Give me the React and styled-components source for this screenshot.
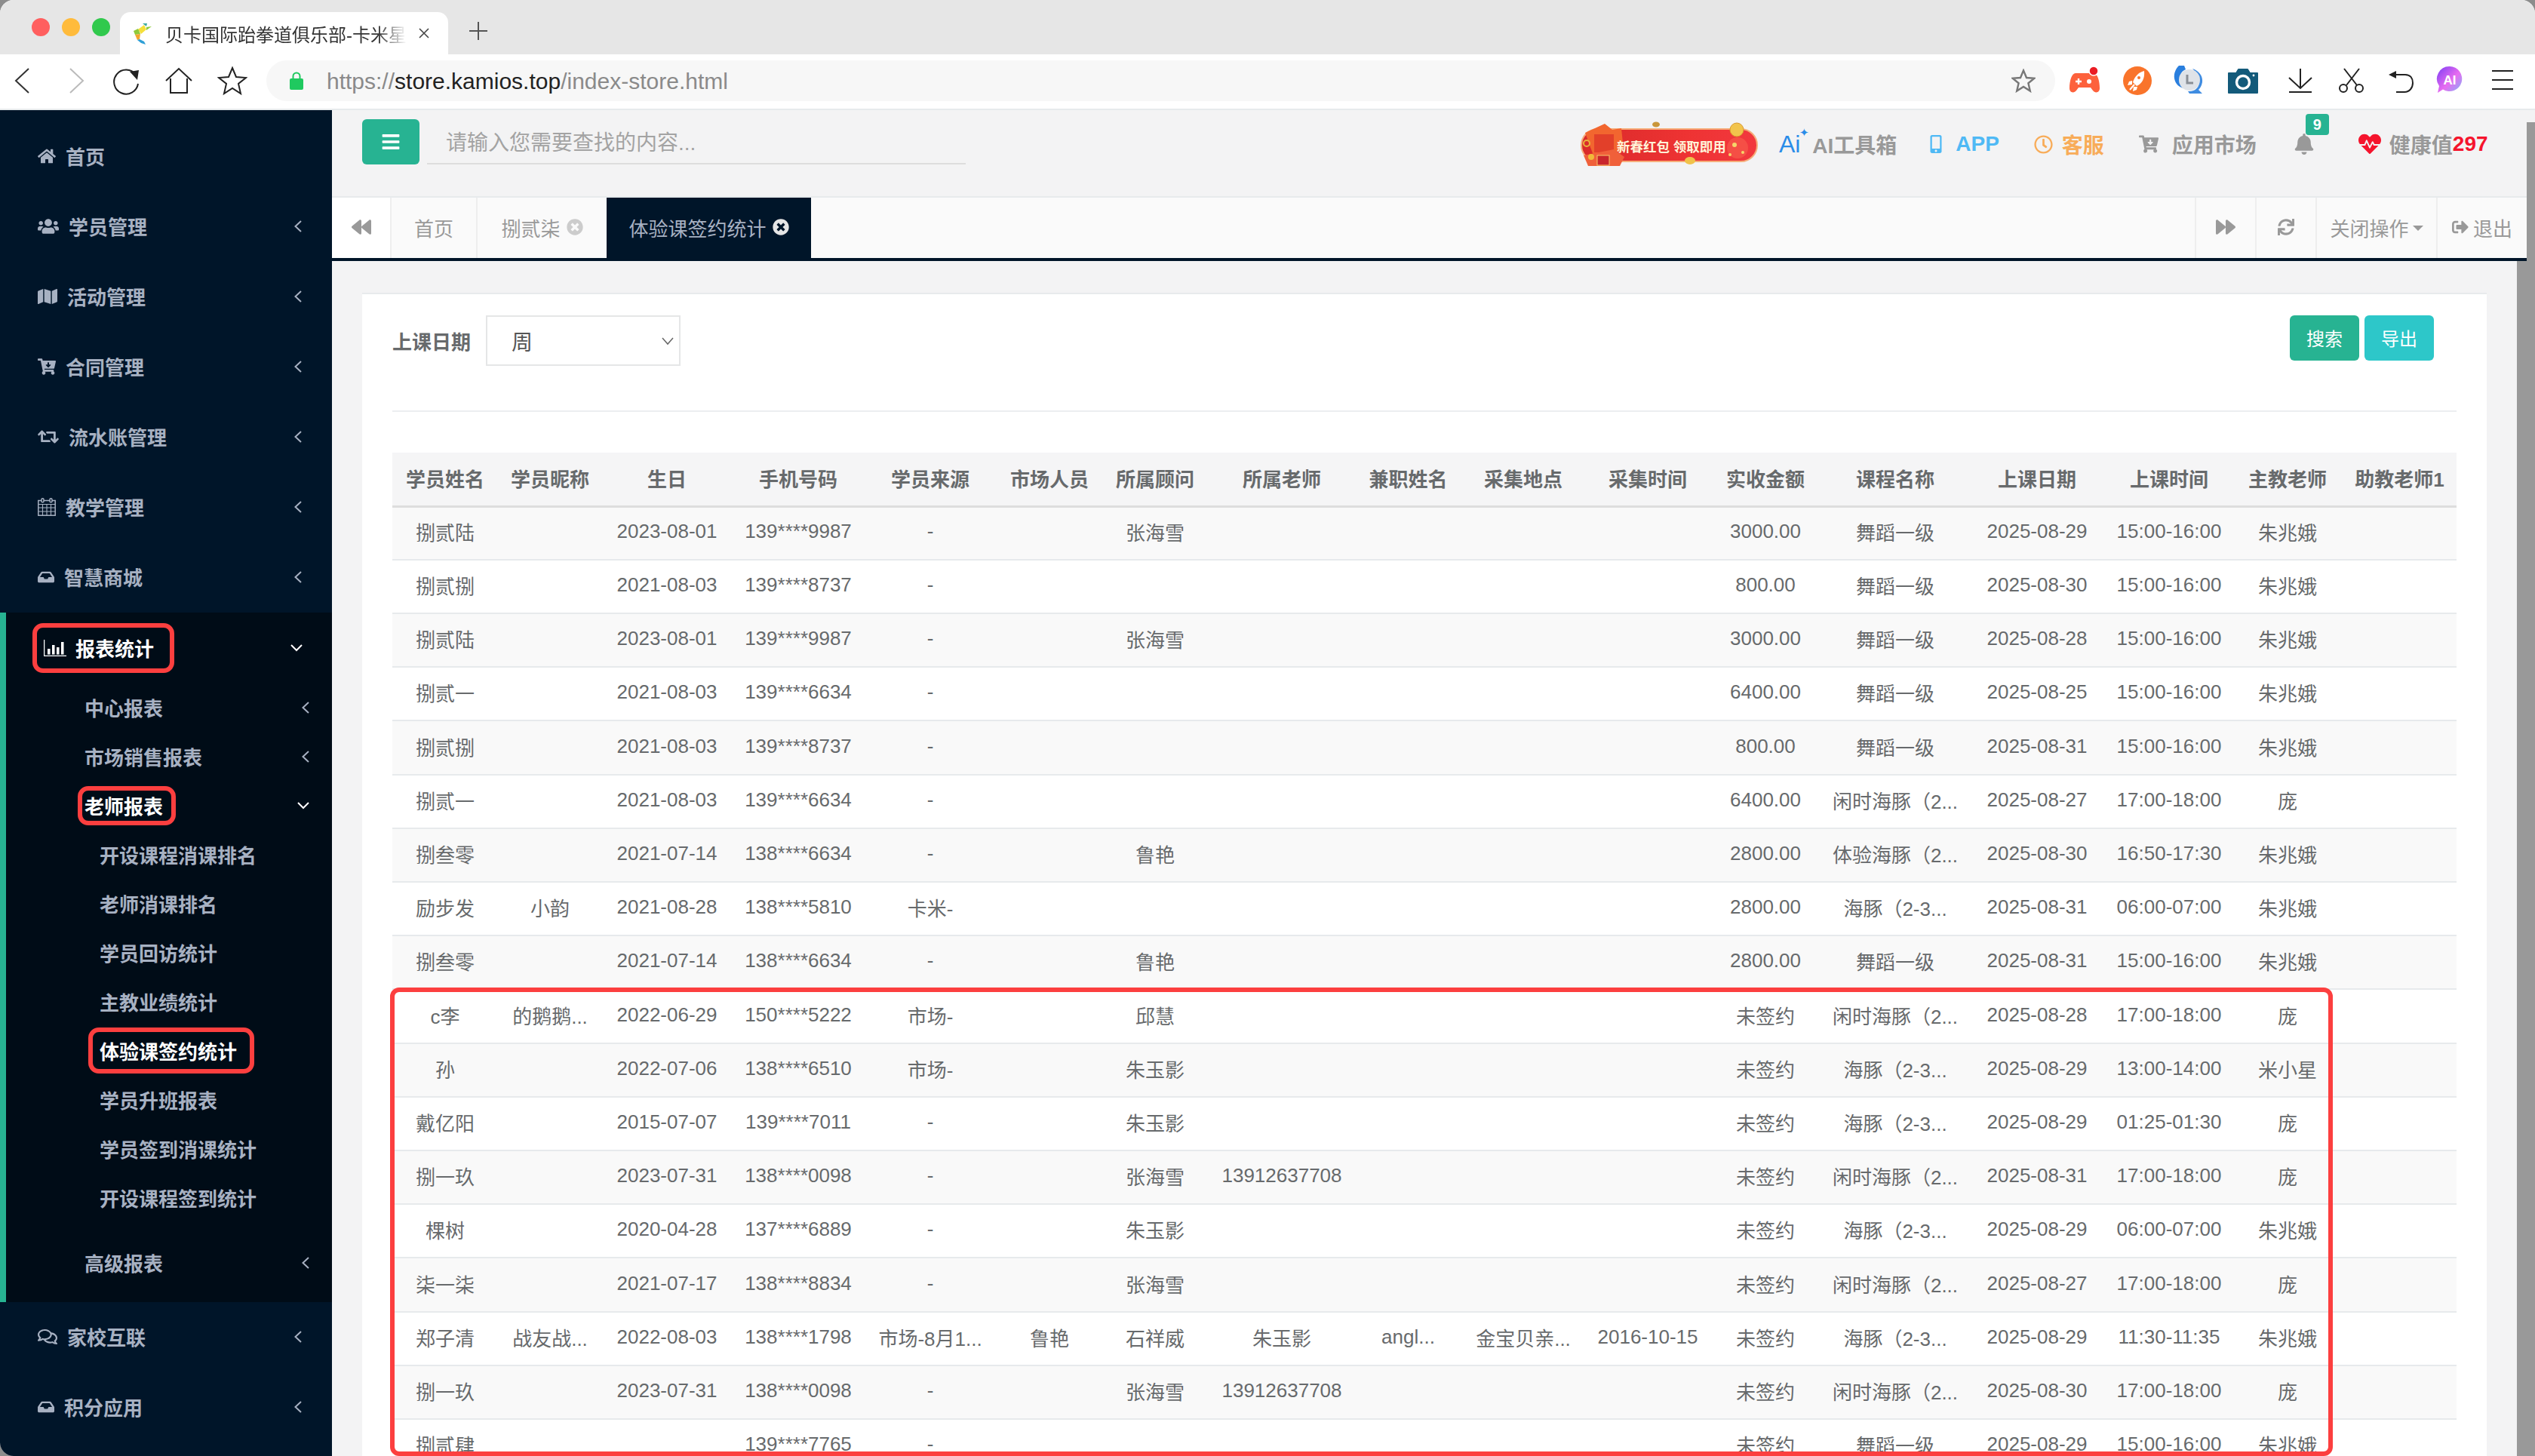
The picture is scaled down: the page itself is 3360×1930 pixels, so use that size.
import React from "react";
import styled, { createGlobalStyle } from "styled-components";
import {
  FaHome,
  FaUsers,
  FaMap,
  FaCartArrowDown,
  FaRetweet,
  FaInbox,
  FaRegComments,
  FaBars,
  FaBackward,
  FaForward,
  FaSync,
  FaTimesCircle,
  FaSignOutAlt,
  FaBell,
  FaHeartbeat,
  FaRegClock,
  FaMobileAlt,
} from "react-icons/fa";

const GlobalStyle = createGlobalStyle`
  html, body {
    margin: 0;
    padding: 0;
    background: #8c8c8c;
    overflow: hidden;
  }
  * { box-sizing: border-box; }
`;

const FONT = `"Liberation Sans", "Noto Sans CJK SC", sans-serif`;
const NAVY = "#001529";
const GREEN = "#27b392";
const RED = "#fc3f3f";

const Chevron = ({ dir = "left", color = "#a7b1c2" }) =>
  dir === "left" ? (
    <svg width="10" height="16" viewBox="0 0 10 16" fill="none" stroke={color} strokeWidth="2">
      <polyline points="9,1 1.5,8 9,15" />
    </svg>
  ) : (
    <svg width="16" height="10" viewBox="0 0 16 10" fill="none" stroke={color} strokeWidth="2">
      <polyline points="1,1 8,8 15,1" />
    </svg>
  );

const CalendarIcon = () => (
  <svg viewBox="0 0 24 24" fill="none" stroke="#a7b1c2" strokeWidth="1.5">
    <rect x="0.8" y="3.5" width="22.4" height="19.7" />
    <path d="M0.8 8.5h22.4M0.8 13h22.4M0.8 18h22.4M6.5 8.5v14.7M12 8.5v14.7M17.5 8.5v14.7" strokeWidth="1.1" />
    <rect x="5" y="0.8" width="3" height="5" rx="1.4" fill={NAVY} />
    <rect x="16" y="0.8" width="3" height="5" rx="1.4" fill={NAVY} />
  </svg>
);

const ChartIcon = () => (
  <svg viewBox="0 0 30 22" fill="#fff">
    <path d="M0.6 0v21.4H30" fill="none" stroke="#fff" strokeWidth="1.3" />
    <rect x="5" y="12" width="3.5" height="7.5" />
    <rect x="11" y="7" width="3.5" height="12.5" />
    <rect x="17" y="10" width="3.5" height="9.5" />
    <rect x="23" y="3" width="3.5" height="16.5" />
  </svg>
);

const DolphinIcon = () => (
  <svg width="28" height="32" viewBox="0 0 28 32">
    <path d="M14 3l6 0-1 4z" fill="#3ba8a0" />
    <path d="M8 11l8-6 3 6-7 6z" fill="#f5e03a" />
    <path d="M19 8l7-1-7 5z" fill="#8fc93a" />
    <path d="M2 13l6-3 3 7-7 1z" fill="#8fc93a" />
    <path d="M4 18l7-1-1 7-3 1z" fill="#f3a52d" />
    <path d="M7 25l3-1 6 3 2 4-6-2z" fill="#2e9fd6" />
  </svg>
);

const GameIcon = () => (
  <svg viewBox="0 0 44 44">
    <path d="M10 12h24c5 0 8 10 8 20 0 6-6 7-9 3l-3-4H14l-3 4c-3 4-9 3-9-3 0-10 3-20 8-20z" fill="#fd613c" />
    <path d="M10 23h8M14 19v8" stroke="#fff" strokeWidth="2.4" />
    <circle cx="28" cy="23" r="3" fill="#fff" />
    <circle cx="34" cy="9" r="6" fill="#ea1c24" stroke="#fff" strokeWidth="1.5" />
  </svg>
);

const RocketIcon = () => (
  <svg viewBox="0 0 44 44">
    <circle cx="22" cy="22" r="19" fill="#f9742b" />
    <path d="M31 9c-8 2-13 8-15 15l5 5c7-3 11-10 10-20z" fill="#fff" />
    <path d="M15 22l-4 1-2 5 6-1zM22 30l-1 4-5 2 1-6z" fill="#fff" />
    <path d="M12 34l6-7" stroke="#fff" strokeWidth="2" />
    <circle cx="24" cy="18" r="2" fill="#f9742b" />
  </svg>
);

const ClockIcon = () => (
  <svg viewBox="0 0 44 44">
    <path d="M8 2l7 0 2 5c-5 2-8 7-8 12 0 6 3 10 8 13-8 0-14-6-15-13C1 12 4 6 8 2z" fill="#2a7fde" />
    <path d="M26 6c9 3 14 10 13 18-1 5-3 8-5 10l5 5H22l-2-3c9 1 15-5 15-13 0-7-4-12-9-17z" fill="#2a7fde" opacity="0.9" />
    <circle cx="22" cy="21" r="14" fill="#dfe3e8" />
    <path d="M19 14v11h8" stroke="#8a8f96" strokeWidth="3" fill="none" />
  </svg>
);

const CameraIcon = () => (
  <svg viewBox="0 0 44 44">
    <path d="M3 12h10l3-5h12l3 5h10v26H3z" fill="#135a7a" stroke="#135a7a" strokeWidth="2" strokeLinejoin="round" />
    <circle cx="22" cy="24" r="8.5" fill="none" stroke="#fff" strokeWidth="3.4" />
    <circle cx="36" cy="15" r="1.4" fill="#fff" />
  </svg>
);

const AiIcon = () => (
  <svg viewBox="0 0 44 44">
    <defs>
      <linearGradient id="aiGrad" x1="0" y1="0" x2="1" y2="1">
        <stop offset="0" stopColor="#7a3cf5" />
        <stop offset="0.55" stopColor="#e86cf0" />
        <stop offset="1" stopColor="#7fb4f8" />
      </linearGradient>
    </defs>
    <path d="M22 3a16.500 16.500 0 1 1-9 30.500L6 38l2-9A16.500 16.500 0 0 1 22 3z" fill="url(#aiGrad)" />
    <text x="22" y="27" textAnchor="middle" fontFamily="Liberation Sans" fontWeight="700" fontSize="17" fill="#fff">
      AI
    </text>
  </svg>
);

const stroke = { fill: "none", stroke: "#222", strokeWidth: 2 };

const DownloadIcon = () => (
  <svg viewBox="0 0 44 44" {...stroke}>
    <path d="M22 6v26M7 18l15 14 15-14M7 37h30" />
  </svg>
);
const ScissorsIcon = () => (
  <svg viewBox="0 0 44 44" {...stroke}>
    <path d="M12 6l17 22M32 6L15 28" />
    <circle cx="11" cy="32" r="5" />
    <circle cx="32" cy="32" r="5" />
  </svg>
);
const UndoIcon = () => (
  <svg viewBox="0 0 44 44" {...stroke}>
    <path d="M12 14h14c7 0 10 5 10 11s-4 12-11 12H14" />
    <path d="M4 14l10-5v10z" fill="#222" stroke="none" />
  </svg>
);
const MenuIcon = () => (
  <svg viewBox="0 0 44 44" {...stroke}>
    <path d="M8 9h28M8 21h28M8 33h28" />
  </svg>
);

const Page = styled.div`
  width: 3360px;
  height: 1930px;
  overflow: hidden;
  position: relative;
  display: flex;
  flex-direction: column;
  border-radius: 18px 18px 0 18px;
  background: #fff;
  font-family: ${FONT};
`;

const TabStrip = styled.div`
  height: 72px;
  background: #e6e6e6;
  display: flex;
  align-items: flex-end;
  padding-left: 42px;
  flex: none;
`;

const Lights = styled.div`
  display: flex;
  gap: 16px;
  align-self: flex-start;
  margin-top: 24px;
`;

const Light = styled.span`
  width: 24px;
  height: 24px;
  border-radius: 50%;
  background: ${(p) => p.$c};
`;

const BrowserTab = styled.div`
  width: 435px;
  height: 56px;
  margin-left: 13px;
  background: #fff;
  border-radius: 14px 14px 0 0;
  display: flex;
  align-items: center;
  padding: 0 18px 0 16px;
  color: #333;
`;

const TabTitle = styled.span`
  width: 320px;
  margin-left: 16px;
  font-size: 24px;
  white-space: nowrap;
  -webkit-mask-image: linear-gradient(90deg, #000 88%, transparent);
  mask-image: linear-gradient(90deg, #000 88%, transparent);
`;

const TabClose = styled.svg`
  margin-left: 16px;
`;

const NewTab = styled.svg`
  margin-left: 28px;
  align-self: center;
  margin-top: 10px;
`;

const Toolbar = styled.div`
  height: 74px;
  flex: none;
  display: flex;
  align-items: center;
  background: #fff;
  border-bottom: 2px solid #e7eaec;
  padding-left: 9px;
  padding-bottom: 2px;
`;

const NavSvg = styled.svg`
  width: 40px;
  height: 40px;
  flex: none;
  margin-left: ${(p) => p.$ml || 0}px;
`;

const Address = styled.div`
  width: 2371px;
  height: 54px;
  margin-left: 25px;
  border-radius: 27px;
  background: #f7f7f7;
  display: flex;
  align-items: center;
  padding: 0 26px 0 31px;
  font-size: 30px;
  color: #8a8a8a;
`;

const LockIcon = () => (
  <svg width="18" height="26" viewBox="0 0 18 26">
    <path d="M4.500 11V7a4.500 4.500 0 0 1 9 0v4" fill="none" stroke="#1fc95f" strokeWidth="2" />
    <rect x="0" y="10" width="18" height="15" rx="2" fill="#1fc95f" />
  </svg>
);

const Url = styled.span`
  margin-left: 31px;
  margin-top: 2px;
  flex: 1;
  b {
    font-weight: 400;
    color: #222;
  }
`;

const ExtIcon = styled.span`
  width: 44px;
  height: 44px;
  flex: none;
  margin-left: ${(p) => p.$ml}px;
  svg {
    width: 44px;
    height: 44px;
    display: block;
  }
`;

const Body = styled.div`
  flex: 1;
  display: flex;
  min-height: 0;
  position: relative;
`;

const Sidebar = styled.nav`
  width: 440px;
  flex: none;
  background: ${NAVY};
  padding-top: 15px;
  color: #a7b1c2;
  font-size: 26px;
  font-weight: 700;
`;

const NavRow = styled.div`
  height: 93px;
  display: flex;
  align-items: center;
  padding: 0 40px 2px 50px;
`;

const NavIcon = styled.span`
  width: ${(p) => p.$w}px;
  height: 28px;
  margin-right: 13px;
  flex: none;
  display: flex;
  align-items: center;
  svg {
    width: ${(p) => p.$w}px;
    height: 28px;
    display: block;
  }
`;

const NavLabel = styled.span`
  flex: 1;
`;

const ActiveGroup = styled.div`
  background: #000c17;
  border-left: 8px solid ${GREEN};
  padding-bottom: 20px;
`;

const ActiveHead = styled.div`
  height: 93px;
  display: flex;
  align-items: center;
  padding: 0 39px 0 50px;
  color: #fff;
`;

const Highlight = styled.span`
  display: inline-flex;
  align-items: center;
  color: #fff;
  border: 6px solid ${RED};
  border-radius: 14px;
  height: ${(p) => p.$h}px;
  width: ${(p) => p.$w}px;
  margin-left: ${(p) => p.$ml}px;
  padding-left: ${(p) => p.$pl}px;
  flex: none;
`;

const ChartBox = styled.span`
  width: 30px;
  height: 22px;
  margin-right: 12px;
  flex: none;
  svg {
    display: block;
    width: 30px;
    height: 22px;
  }
`;

const SubRow = styled.div`
  height: 65px;
  display: flex;
  align-items: center;
  justify-content: space-between;
  padding: 0 30px 0 104px;
  margin-top: ${(p) => p.$mt || 0}px;
`;

const LeafRow = styled.div`
  height: 65px;
  display: flex;
  align-items: center;
  padding-left: 124px;
  font-size: 26px;
`;

const Grow = styled.div`
  flex: 1;
`;

const Main = styled.main`
  flex: 1;
  min-width: 0;
  background: #f3f3f4;
  display: flex;
  flex-direction: column;
`;

const Header = styled.header`
  height: 114px;
  flex: none;
  display: flex;
  padding: 12px 0 0 40px;
  font-size: 28px;
  font-weight: 700;
  color: #999;
`;

const MenuBtn = styled.div`
  width: 76px;
  height: 60px;
  border-radius: 6px;
  background: ${GREEN};
  color: #fff;
  display: flex;
  align-items: center;
  justify-content: center;
  font-size: 26px;
`;

const SearchBox = styled.div`
  width: 714px;
  height: 60px;
  margin-left: 10px;
  border-bottom: 2px solid #ddd;
  padding: 0 0 0 25px;
  display: flex;
  align-items: center;
  font-size: 28px;
  font-weight: 400;
  color: #a3a3a3;
`;

const HeaderRight = styled.div`
  flex: 1;
  height: 66px;
  display: flex;
  align-items: center;
  padding-left: 815px;
`;

const Banner = styled.div`
  position: relative;
  width: 235px;
  height: 62px;
  flex: none;
  display: flex;
  align-items: center;
  font-size: 17.500px;
  color: #fff3d8;
  font-weight: 700;
  padding-left: 48px;
  white-space: nowrap;
  &::before {
    content: "";
    position: absolute;
    left: 0;
    right: 0;
    top: 10px;
    bottom: 7px;
    border-radius: 24px;
    background: linear-gradient(90deg, #d92a2a, #ee3333 60%, #f2383e);
    border: 2px solid #f6ad7a;
  }
`;

const BannerText = styled.span`
  position: relative;
  margin-top: 4px;
`;

const BannerArt = styled.svg`
  position: absolute;
  left: 0;
  top: 0;
  width: 235px;
  height: 62px;
`;

const HeadLink = styled.span`
  display: flex;
  align-items: center;
  flex: none;
  color: ${(p) => p.$c || "#999"};
  margin-left: ${(p) => p.$ml}px;
  white-space: nowrap;
`;

const HeadIcon = styled.span`
  display: flex;
  align-items: center;
  margin-right: ${(p) => p.$mr}px;
  color: ${(p) => p.$c || "inherit"};
  font-size: ${(p) => p.$s}px;
  svg {
    display: block;
  }
`;

const AiMark = styled.span`
  position: relative;
  color: #2a8ce8;
  font-weight: 400;
  font-size: 32px;
  margin-right: 8px;
  &::after {
    content: "✦";
    position: absolute;
    font-size: 15px;
    right: -12px;
    top: -6px;
  }
`;

const BellBox = styled.span`
  position: relative;
  display: flex;
  margin-left: 49px;
  color: #999;
  font-size: 28px;
`;

const BellBadge = styled.span`
  position: absolute;
  left: 16px;
  top: -26px;
  width: 31px;
  height: 28px;
  border-radius: 4px;
  background: ${GREEN};
  color: #fff;
  font-size: 20px;
  font-weight: 700;
  display: flex;
  align-items: center;
  justify-content: center;
`;

const Red = styled.span`
  color: #f5142d;
`;

const TabBar = styled.div`
  height: 86px;
  flex: none;
  margin-right: 11px;
  background: #fafafa;
  border-top: 2px solid #e7eaec;
  border-bottom: 4px solid ${NAVY};
  display: flex;
  font-size: 26px;
  color: #999;
`;

const TabBtn = styled.div`
  width: ${(p) => p.$w}px;
  flex: none;
  display: flex;
  align-items: center;
  justify-content: center;
  gap: ${(p) => p.$gap || 0}px;
  padding-bottom: 2px;
  background: ${(p) => (p.$white ? "#fff" : "transparent")};
  border-right: ${(p) => (p.$line === "r" ? "2px solid #eee" : "none")};
  border-left: ${(p) => (p.$line === "l" ? "2px solid #eee" : "none")};
  white-space: nowrap;
`;

const ActiveTab = styled(TabBtn)`
  background: ${NAVY};
  color: #a7b1c2;
`;

const TabFill = styled.div`
  flex: 1;
`;

const Caret = styled.i`
  width: 0;
  height: 0;
  margin-left: 5px;
  margin-top: 3px;
  border-left: 7px solid transparent;
  border-right: 7px solid transparent;
  border-top: 7px solid #999;
`;

const Content = styled.div`
  flex: 1;
  min-height: 0;
  padding: 42px 64px 0 40px;
  overflow: hidden;
`;

const Panel = styled.section`
  background: #fff;
  border-top: 2px solid #e7eaec;
  padding: 28px 40px 0;
  height: 1600px;
`;

const FilterRow = styled.div`
  display: flex;
  align-items: flex-start;
  justify-content: space-between;
  height: 128px;
  border-bottom: 2px solid #eceef0;
  padding-right: 30px;
`;

const FilterLeft = styled.div`
  display: flex;
  align-items: center;
  gap: 20px;
  font-size: 26px;
  font-weight: 700;
  color: #676a6c;
`;

const FakeSelect = styled.div`
  width: 258px;
  height: 67px;
  border: 2px solid #e5e6e7;
  display: flex;
  align-items: center;
  justify-content: space-between;
  padding: 0 6px 0 32px;
  font-weight: 400;
  font-size: 28px;
  color: #555;
`;

const FilterButtons = styled.div`
  display: flex;
  gap: 7px;
`;

const ActionBtn = styled.div`
  width: 92px;
  height: 60px;
  border-radius: 6px;
  background: ${(p) => p.$c};
  color: #fff;
  font-size: 24px;
  padding-bottom: 2px;
  display: flex;
  align-items: center;
  justify-content: center;
`;

const TableWrap = styled.div`
  position: relative;
  margin-top: 54px;
`;

const Table = styled.table`
  width: 2736px;
  table-layout: fixed;
  border-collapse: collapse;
  font-size: 26px;
  color: #676a6c;

  th {
    height: 71px;
    padding: 0 0 3px;
    text-align: center;
    font-weight: 700;
    background: #f5f5f6;
    border-bottom: 3px solid #ddd;
    white-space: nowrap;
  }
  td {
    height: 71px;
    padding: 0 0 4px;
    text-align: center;
    border-bottom: 2px solid #e7eaec;
    white-space: nowrap;
  }
  tbody tr:nth-child(5n) td {
    height: 72px;
  }
  tbody tr:nth-child(odd) td {
    background: #f9f9f9;
  }
`;

const RedFrame = styled.div`
  position: absolute;
  left: -3px;
  top: 709px;
  width: 2575px;
  height: 621px;
  border: 6px solid ${RED};
  border-radius: 12px;
  pointer-events: none;
`;

const ScrollThumb = styled.div`
  position: absolute;
  right: 0;
  top: ${(p) => p.$top}px;
  bottom: 0;
  width: ${(p) => p.$w}px;
  background: #999;
`;

const COLS = [140, 138, 172, 176, 174, 142, 138, 198, 137, 168, 162, 150, 194, 182, 168, 146, 151];
const HEADS = [
  "学员姓名", "学员昵称", "生日", "手机号码", "学员来源", "市场人员", "所属顾问", "所属老师", "兼职姓名",
  "采集地点", "采集时间", "实收金额", "课程名称", "上课日期", "上课时间", "主教老师", "助教老师1",
];

const W = "舞蹈一级";
const X = "闲时海豚（2...";
const H = "海豚（2-3...";
const Z = "朱兆娥";
const T = "15:00-16:00";
const E = "17:00-18:00";
const N = "未签约";
const r = (name, nick, birth, phone, src, mkt, adv, tch, pt, place, time, amt, course, date, clock, main) => [
  name, nick, birth, phone, src, mkt, adv, tch, pt, place, time, amt, course, date, clock, main, "",
];

const ROWS = [
  r("捌贰陆", "", "2023-08-01", "139****9987", "-", "", "张海雪", "", "", "", "", "3000.00", W, "2025-08-29", T, Z),
  r("捌贰捌", "", "2021-08-03", "139****8737", "-", "", "", "", "", "", "", "800.00", W, "2025-08-30", T, Z),
  r("捌贰陆", "", "2023-08-01", "139****9987", "-", "", "张海雪", "", "", "", "", "3000.00", W, "2025-08-28", T, Z),
  r("捌贰一", "", "2021-08-03", "139****6634", "-", "", "", "", "", "", "", "6400.00", W, "2025-08-25", T, Z),
  r("捌贰捌", "", "2021-08-03", "139****8737", "-", "", "", "", "", "", "", "800.00", W, "2025-08-31", T, Z),
  r("捌贰一", "", "2021-08-03", "139****6634", "-", "", "", "", "", "", "", "6400.00", X, "2025-08-27", E, "庞"),
  r("捌叁零", "", "2021-07-14", "138****6634", "-", "", "鲁艳", "", "", "", "", "2800.00", "体验海豚（2...", "2025-08-30", "16:50-17:30", Z),
  r("励步发", "小韵", "2021-08-28", "138****5810", "卡米-", "", "", "", "", "", "", "2800.00", H, "2025-08-31", "06:00-07:00", Z),
  r("捌叁零", "", "2021-07-14", "138****6634", "-", "", "鲁艳", "", "", "", "", "2800.00", W, "2025-08-31", T, Z),
  r("c李", "的鹅鹅...", "2022-06-29", "150****5222", "市场-", "", "邱慧", "", "", "", "", N, X, "2025-08-28", E, "庞"),
  r("孙", "", "2022-07-06", "138****6510", "市场-", "", "朱玉影", "", "", "", "", N, H, "2025-08-29", "13:00-14:00", "米小星"),
  r("戴亿阳", "", "2015-07-07", "139****7011", "-", "", "朱玉影", "", "", "", "", N, H, "2025-08-29", "01:25-01:30", "庞"),
  r("捌一玖", "", "2023-07-31", "138****0098", "-", "", "张海雪", "13912637708", "", "", "", N, X, "2025-08-31", E, "庞"),
  r("棵树", "", "2020-04-28", "137****6889", "-", "", "朱玉影", "", "", "", "", N, H, "2025-08-29", "06:00-07:00", Z),
  r("柒一柒", "", "2021-07-17", "138****8834", "-", "", "张海雪", "", "", "", "", N, X, "2025-08-27", E, "庞"),
  r("郑子清", "战友战...", "2022-08-03", "138****1798", "市场-8月1...", "鲁艳", "石祥威", "朱玉影", "angl...", "金宝贝亲...", "2016-10-15", N, H, "2025-08-29", "11:30-11:35", Z),
  r("捌一玖", "", "2023-07-31", "138****0098", "-", "", "张海雪", "13912637708", "", "", "", N, X, "2025-08-30", E, "庞"),
  r("捌贰肆", "", "", "139****7765", "-", "", "", "", "", "", "", N, W, "2025-08-29", T, Z),
];

const TOP_NAV = [
  { label: "首页", icon: <FaHome />, w: 24, plain: true },
  { label: "学员管理", icon: <FaUsers />, w: 28 },
  { label: "活动管理", icon: <FaMap />, w: 26 },
  { label: "合同管理", icon: <FaCartArrowDown />, w: 24 },
  { label: "流水账管理", icon: <FaRetweet />, w: 28 },
  { label: "教学管理", icon: <CalendarIcon />, w: 24 },
  { label: "智慧商城", icon: <FaInbox />, w: 22 },
];

const BOTTOM_NAV = [
  { label: "家校互联", icon: <FaRegComments />, w: 26 },
  { label: "积分应用", icon: <FaInbox />, w: 22 },
];

const NavItem = ({ item }) => (
  <NavRow>
    <NavIcon $w={item.w}>{item.icon}</NavIcon>
    <NavLabel>{item.label}</NavLabel>
    {!item.plain && <Chevron />}
  </NavRow>
);

const EXT = [
  [GameIcon, 17],
  [RocketIcon, 26],
  [ClockIcon, 25],
  [CameraIcon, 27],
  [DownloadIcon, 32],
  [ScissorsIcon, 24],
  [UndoIcon, 23],
  [AiIcon, 19],
  [MenuIcon, 26],
];

export default function App() {
  return (
    <Page>
      <GlobalStyle />
      <TabStrip>
        <Lights>
          <Light $c="#ff5f5f" />
          <Light $c="#ffbb3c" />
          <Light $c="#31c94d" />
        </Lights>
        <BrowserTab>
          <DolphinIcon />
          <TabTitle>贝卡国际跆拳道俱乐部-卡米星</TabTitle>
          <TabClose width="14" height="14" viewBox="0 0 14 14" stroke="#444" strokeWidth="1.6">
            <path d="M1 1l12 12M13 1L1 13" />
          </TabClose>
        </BrowserTab>
        <NewTab width="24" height="24" viewBox="0 0 24 24" stroke="#555" strokeWidth="2">
          <path d="M12 0v24M0 12h24" />
        </NewTab>
      </TabStrip>

      <Toolbar>
        <NavSvg viewBox="0 0 40 40" fill="none" stroke="#333" strokeWidth="2">
          <polyline points="29,4 12,20 29,36" />
        </NavSvg>
        <NavSvg $ml={32} viewBox="0 0 40 40" fill="none" stroke="#bbb" strokeWidth="2">
          <polyline points="12,4 29,20 12,36" />
        </NavSvg>
        <NavSvg $ml={26} viewBox="0 0 40 40" fill="none" stroke="#222" strokeWidth="2">
          <path d="M33 12A16 16 0 1 0 36 24" />
          <path d="M25 8l12-2-2 13z" fill="#222" stroke="none" />
        </NavSvg>
        <NavSvg $ml={30} viewBox="0 0 40 40" fill="none" stroke="#222" strokeWidth="2">
          <path d="M3 20L20 4l17 16M9 17v19h22V17" />
        </NavSvg>
        <NavSvg $ml={31} viewBox="0 0 40 40" fill="none" stroke="#222" strokeWidth="2">
          <path d="M20 3l5 12 13 1-10 8 3 13-11-7-11 7 3-13-10-8 13-1z" />
        </NavSvg>
        <Address>
          <LockIcon />
          <Url>
            https://<b>store.kamios.top</b>/index-store.html
          </Url>
          <svg width="32" height="32" viewBox="0 0 40 40" fill="none" stroke="#777" strokeWidth="3">
            <path d="M20 3l5 12 13 1-10 8 3 13-11-7-11 7 3-13-10-8 13-1z" />
          </svg>
        </Address>
        {EXT.map(([Icon, ml], i) => (
          <ExtIcon key={i} $ml={ml}>
            <Icon />
          </ExtIcon>
        ))}
      </Toolbar>

      <Body>
        <Sidebar>
          {TOP_NAV.map((item) => (
            <NavItem key={item.label} item={item} />
          ))}
          <ActiveGroup>
            <ActiveHead>
              <Highlight $w={188} $h={66} $ml={-15} $pl={9}>
                <ChartBox>
                  <ChartIcon />
                </ChartBox>
                报表统计
              </Highlight>
              <Grow />
              <Chevron dir="down" color="#fff" />
            </ActiveHead>
            <SubRow>
              中心报表
              <Chevron />
            </SubRow>
            <SubRow>
              市场销售报表
              <Chevron />
            </SubRow>
            <SubRow>
              <Highlight $w={130} $h={52} $ml={-9} $pl={3}>
                老师报表
              </Highlight>
              <Chevron dir="down" color="#fff" />
            </SubRow>
            <LeafRow>开设课程消课排名</LeafRow>
            <LeafRow>老师消课排名</LeafRow>
            <LeafRow>学员回访统计</LeafRow>
            <LeafRow>主教业绩统计</LeafRow>
            <LeafRow>
              <Highlight $w={220} $h={61} $ml={-15} $pl={9}>
                体验课签约统计
              </Highlight>
            </LeafRow>
            <LeafRow>学员升班报表</LeafRow>
            <LeafRow>学员签到消课统计</LeafRow>
            <LeafRow>开设课程签到统计</LeafRow>
            <SubRow $mt={21}>
              高级报表
              <Chevron />
            </SubRow>
          </ActiveGroup>
          {BOTTOM_NAV.map((item) => (
            <NavItem key={item.label} item={item} />
          ))}
        </Sidebar>

        <Main>
          <Header>
            <MenuBtn>
              <FaBars />
            </MenuBtn>
            <SearchBox>请输入您需要查找的内容...</SearchBox>
            <HeaderRight>
              <Banner>
                <BannerArt viewBox="0 0 235 62">
                  <path d="M6 16L32 4l10 8 12-2 3 30-40 6z" fill="#f2662f" />
                  <rect x="18" y="18" width="26" height="24" fill="#e2402a" />
                  <path d="M4 46l40-8 14 10-6 12H10z" fill="#f0603a" />
                  <rect x="22" y="46" width="16" height="13" fill="#c9252c" stroke="#f6c76a" />
                  <circle cx="8" cy="30" r="4" fill="none" stroke="#e8b33c" strokeWidth="2" />
                  <circle cx="14" cy="48" r="4" fill="#f0b93a" />
                  <ellipse cx="100" cy="5" rx="5" ry="3.500" fill="#c9963a" />
                  <ellipse cx="145" cy="53" rx="7" ry="5" fill="#f0c24a" />
                  <circle cx="207" cy="12" r="9" fill="#f2c44c" stroke="#d99a2e" />
                  <circle cx="208" cy="36" r="14" fill="#f65a4a" opacity="0.7" />
                  <circle cx="204" cy="32" r="3" fill="#f6d56a" />
                  <circle cx="215" cy="42" r="2" fill="#f6d56a" />
                  <circle cx="198" cy="45" r="2" fill="#f6d56a" />
                </BannerArt>
                <BannerText>新春红包 领取即用</BannerText>
              </Banner>
              <HeadLink $ml={28}>
                <AiMark>Ai</AiMark>
                <span>&nbsp;AI工具箱</span>
              </HeadLink>
              <HeadLink $ml={40} $c="#4fb9f5">
                <HeadIcon $mr={14} $s={24}>
                  <FaMobileAlt />
                </HeadIcon>
                APP
              </HeadLink>
              <HeadLink $ml={46} $c="#f8ac59">
                <HeadIcon $mr={12} $s={25}>
                  <FaRegClock />
                </HeadIcon>
                客服
              </HeadLink>
              <HeadLink $ml={46}>
                <HeadIcon $mr={18} $s={26}>
                  <FaCartArrowDown />
                </HeadIcon>
                应用市场
              </HeadLink>
              <BellBox>
                <FaBell />
                <BellBadge>9</BellBadge>
              </BellBox>
              <HeadLink $ml={58}>
                <HeadIcon $mr={11} $s={30} $c="#f5142d">
                  <FaHeartbeat />
                </HeadIcon>
                健康值<Red>297</Red>
              </HeadLink>
            </HeaderRight>
          </Header>

          <TabBar>
            <TabBtn $w={79} $white $line="r">
              <FaBackward />
            </TabBtn>
            <TabBtn $w={114} $line="r">
              首页
            </TabBtn>
            <TabBtn $w={171} $gap={8}>
              捌贰柒
              <FaTimesCircle color="#ccc" size={22} />
            </TabBtn>
            <ActiveTab $w={271} $gap={8}>
              体验课签约统计
              <FaTimesCircle color="#e6e6e6" size={22} />
            </ActiveTab>
            <TabFill />
            <TabBtn $w={80} $line="l">
              <FaForward />
            </TabBtn>
            <TabBtn $w={80} $line="l">
              <FaSync size={22} />
            </TabBtn>
            <TabBtn $w={160} $line="l">
              关闭操作
              <Caret />
            </TabBtn>
            <TabBtn $w={120} $line="l" $gap={6}>
              <FaSignOutAlt size={22} />
              退出
            </TabBtn>
          </TabBar>

          <Content>
            <Panel>
              <FilterRow>
                <FilterLeft>
                  上课日期
                  <FakeSelect>
                    周
                    <svg width="18" height="12" viewBox="0 0 18 12" fill="none" stroke="#666" strokeWidth="1.5">
                      <polyline points="2,2 9,10 16,2" />
                    </svg>
                  </FakeSelect>
                </FilterLeft>
                <FilterButtons>
                  <ActionBtn $c={GREEN}>搜索</ActionBtn>
                  <ActionBtn $c="#2dc7c9">导出</ActionBtn>
                </FilterButtons>
              </FilterRow>
              <TableWrap>
                <Table>
                  <colgroup>
                    {COLS.map((w, i) => (
                      <col key={i} width={w} />
                    ))}
                  </colgroup>
                  <thead>
                    <tr>
                      {HEADS.map((h) => (
                        <th key={h}>{h}</th>
                      ))}
                    </tr>
                  </thead>
                  <tbody>
                    {ROWS.map((row, i) => (
                      <tr key={i}>
                        {row.map((cell, j) => (
                          <td key={j}>{cell}</td>
                        ))}
                      </tr>
                    ))}
                  </tbody>
                </Table>
                <RedFrame />
              </TableWrap>
            </Panel>
          </Content>
        </Main>
        <ScrollThumb $top={16} $w={11} />
        <ScrollThumb $top={200} $w={24} />
      </Body>
    </Page>
  );
}
